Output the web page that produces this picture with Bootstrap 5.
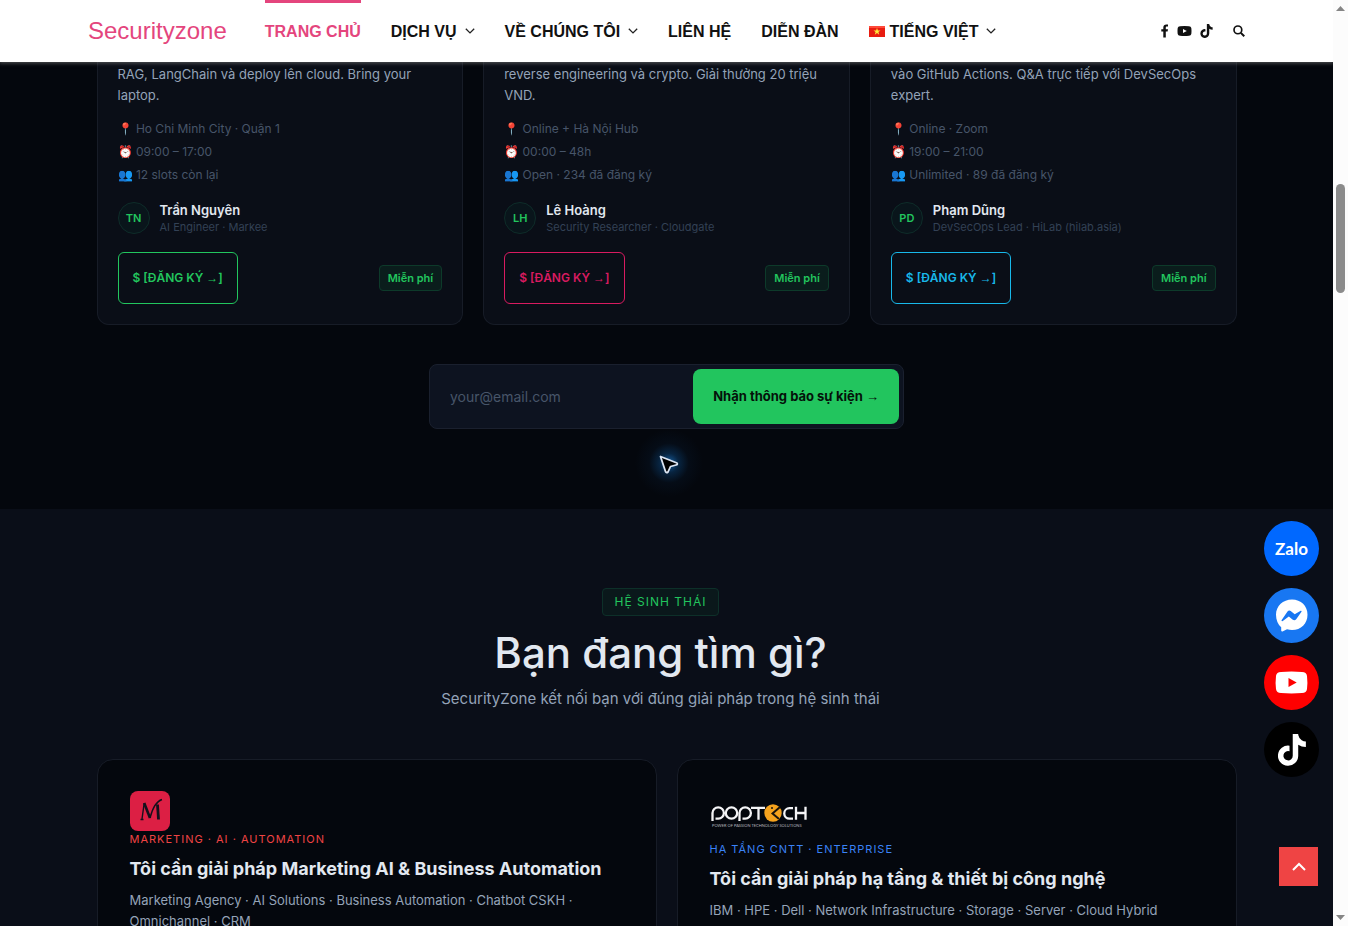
<!DOCTYPE html>
<html lang="vi">
<head>
<meta charset="utf-8">
<meta name="viewport" content="width=device-width, initial-scale=1">
<title>Securityzone</title>
<link rel="stylesheet" href="https://cdn.jsdelivr.net/npm/bootstrap@5.3.0/dist/css/bootstrap.min.css">
<style>
  :root { --ink: #04070d; --panel: #0a0e17; --edge: #171c27; --green: #22c55e; --text: #e2e8f0; --soft: #94a3b8; --dim: #475569; --pink: #e4457d; }
  body { font-family: Inter, "Open Sans", sans-serif; font-size: 13px; line-height: 21px; background: var(--ink); color: var(--soft); }
  a { text-decoration: none; }
  .site-header { background: #fff; height: 62px; padding: 0 88px; box-shadow: 0 0 4px 1px rgba(120,120,120,.7); z-index: 2; font-family: "Liberation Sans", Arial, sans-serif; }
  .brand { color: var(--pink); font-size: 24px; line-height: 30px; margin-right: 38px; }
  .brand:hover { color: var(--pink); }
  .menu { gap: 30px; font-size: 16px; font-weight: 700; }
  .menu a { color: #111; height: 62px; border-top: 3px solid transparent; padding-bottom: 3px; white-space: nowrap; }
  .menu a.current { color: var(--pink); border-color: var(--pink); }
  .menu .chev { margin-left: 8px; }
  .menu .flag { margin-right: 5px; }
  .tools a, .tools button { color: #111; line-height: 0; }
  .wrap { width: 100%; max-width: 1140px; margin: 0 auto; }
  .wrap .cols { gap: 20px; }
  .event { background: var(--panel); border: 1px solid var(--edge); border-top: 0; border-radius: 0 0 12px 12px; padding: 2px 20px 20px; flex: 1 1 0; min-width: 0; }
  .event p { height: 42px; margin-bottom: 11px; }
  .facts { font-size: 12px; line-height: 23px; color: var(--dim); margin-bottom: 16px; }
  .face { width: 32px; height: 32px; border: 1px solid #0e2c29; border-radius: 50%; background: #09151b; color: var(--green); font-size: 11px; font-weight: 600; }
  .who { gap: 10px; margin-bottom: 16px; }
  .who strong { display: block; color: var(--text); font-weight: 600; line-height: 16px; }
  .who small { display: block; font-size: 11px; line-height: 18px; color: #334155; }
  .join { height: 52px; padding: 0 14px; border: 1px solid var(--tone); color: var(--tone); border-radius: 6px; font-size: 12px; font-weight: 600; background: none; }
  .arrow { font-family: "Liberation Sans", Arial, sans-serif; font-weight: 400; }
  .free { border: 1px solid #0d3a2a; background: #0a1d1c; color: var(--green); font-size: 11px; font-weight: 600; line-height: 24px; padding: 0 8px; border-radius: 4px; }
  .notify { width: 475px; margin: 39px auto 80px; border: 1px solid #1a202e; background: #0d1320; border-radius: 8px; padding: 4px; }
  .notify input { background: none; border: 0; color: var(--text); font-size: 14px; padding: 0 16px; min-width: 0; outline: 0; }
  .notify input::placeholder { color: var(--dim); opacity: 1; }
  .notify button { height: 55px; border: 0; border-radius: 8px; background: var(--green); color: #04120a; font-weight: 700; padding: 0 20px; white-space: nowrap; }
  .eco { background: #0a0e18; padding-top: 79px; }
  .eco-head { padding-right: 12px; margin-bottom: 49px; }
  .tag { border: 1px solid #0d3029; background: #0a181b; color: var(--green); font-size: 12px; line-height: 26px; letter-spacing: 1px; padding: 0 12px; border-radius: 4px; }
  .eco h2 { color: var(--text); font-size: 42px; font-weight: 500; line-height: 50px; margin: 12px 0 10px; }
  .eco-head p { font-size: 15px; line-height: 22px; margin: 0; }
  .route { background: #04070d; border: 1px solid var(--edge); border-radius: 16px; padding: 31px 32px; flex: 1 1 0; min-width: 0; height: 240px; }
  .kind { font-size: 11px; line-height: 16px; letter-spacing: 1px; }
  .route h3 { color: var(--text); font-size: 18px; line-height: 24px; font-weight: 700; margin: 10px 0 9px; }
  .m-logo { width: 40px; height: 40px; border-radius: 8px; background: #dc1f44; }
  .p-logo { width: 100px; height: 50px; }
  .chat { position: fixed; right: 29px; top: 521px; gap: 12px; z-index: 3; }
  .chat a { width: 55px; height: 55px; border-radius: 50%; color: #fff; }
  .zalo { background: #0068ff; font: 700 17px Lato, sans-serif; }
  .to-top { position: fixed; right: 30px; bottom: 40px; width: 39px; height: 39px; background: #ef4444; border: 0; z-index: 3; }
  .pointer { position: absolute; left: 50%; top: 361px; margin-left: -38px; width: 80px; height: 80px; background: radial-gradient(circle, rgba(30,130,220,.7) 0, rgba(14,90,160,.35) 17%, rgba(14,60,110,.1) 35%, transparent 60%); }
  .rail { width: 15px; background: #fcfcfc; padding: 6px 0; }
  .rail i { width: 9px; height: 109px; border-radius: 5px; background: #8b8b8b; margin-top: 173px; }
</style>
</head>
<body class="d-flex vh-100 overflow-hidden">
<div class="d-flex flex-column flex-grow-1 overflow-hidden">
  <header class="site-header d-flex align-items-center flex-shrink-0 position-relative">
    <a class="brand" href="#">Securityzone</a>
    <nav class="menu d-flex">
      <a class="current d-flex align-items-center" href="#">TRANG CHỦ</a>
      <a class="d-flex align-items-center" href="#">DỊCH VỤ<svg class="chev" width="10" height="6" viewBox="0 0 10 6" fill="none" stroke="#222" stroke-width="1.3"><path d="M.8.7 5 4.9 9.200.7"/></svg></a>
      <a class="d-flex align-items-center" href="#">VỀ CHÚNG TÔI<svg class="chev" width="10" height="6" viewBox="0 0 10 6" fill="none" stroke="#222" stroke-width="1.3"><path d="M.8.7 5 4.9 9.200.7"/></svg></a>
      <a class="d-flex align-items-center" href="#">LIÊN HỆ</a>
      <a class="d-flex align-items-center" href="#">DIỄN ĐÀN</a>
      <a class="d-flex align-items-center" href="#"><svg class="flag" width="16" height="11" viewBox="0 0 16 11"><path fill="#e81c10" d="M0 0h16v11H0z"/><path fill="#ff4a3a" d="M0 0h16v2H0z"/><path fill="#ffea3c" d="m8 2 .9 2.500h2.600L9.400 6.100l.8 2.600L8 7.100 5.800 8.700l.8-2.600L4.500 4.500h2.600z"/></svg>TIẾNG VIỆT<svg class="chev" width="10" height="6" viewBox="0 0 10 6" fill="none" stroke="#222" stroke-width="1.3"><path d="M.8.7 5 4.900 9.200.7"/></svg></a>
    </nav>
    <div class="tools d-flex align-items-center ms-auto">
      <a href="#" aria-label="Facebook"><svg width="8" height="14" viewBox="0 0 8 14" fill="currentColor"><path d="M2.300 13.500V7.500H.3V5.200h2V3.500C2.300 1.500 3.500.4 5.300.4c.8 0 1.700.2 1.700.2v1.900H6c-1 0-1.200.6-1.200 1.200v1.500H7l-.4 2.300H4.800v6z"/></svg></a>
      <a class="ms-2" href="#" aria-label="YouTube"><svg width="15" height="10" viewBox="0 0 14 10"><path fill="currentColor" d="M2.500.2Q7-.2 11.500.2 13.500.3 13.800 2q.4 3 0 6-.3 1.700-2.300 1.800-4.500.4-9 0Q.5 9.700.2 8q-.4-3 0-6Q.5.3 2.500.2z"/><path fill="#fff" d="m5.500 2.900 3.800 2.100-3.800 2.100z"/></svg></a>
      <a class="ms-2" href="#" aria-label="TikTok"><svg width="13" height="14" viewBox="0 0 448 512" fill="currentColor"><path d="M448 210a210 210 0 0 1-123-39v179A163 163 0 1 1 185 188v90a75 75 0 1 0 52 71V0h88a121 121 0 0 0 2 22 122 122 0 0 0 54 80 121 121 0 0 0 67 20z"/></svg></a>
      <button class="btn p-0 border-0 ms-3" type="button" aria-label="Tìm kiếm"><svg class="ms-1" width="12" height="12" viewBox="0 0 13 13" fill="none" stroke="currentColor"><circle cx="5.300" cy="5.300" r="4.200" stroke-width="1.800"/><path stroke-width="2.200" d="m8.500 8.500 3.700 3.700"/></svg></button>
    </div>
  </header>

  <main class="flex-grow-1 overflow-hidden position-relative">
    <section>
      <div class="wrap">
        <div class="cols d-flex">
          <article class="event">
            <p>RAG, LangChain và deploy lên cloud. Bring your laptop.</p>
            <div class="facts"><div>📍 Ho Chi Minh City · Quận 1</div><div>⏰ 09:00 – 17:00</div><div>👥 12 slots còn lại</div></div>
            <div class="who d-flex"><span class="face d-flex align-items-center justify-content-center">TN</span><div><strong>Trần Nguyên</strong><small>AI Engineer · Markee</small></div></div>
            <div class="d-flex align-items-center justify-content-between"><button class="join" type="button" style="--tone:#22c55e">$ [ĐĂNG KÝ <span class="arrow">→</span>]</button><span class="free">Miễn phí</span></div>
          </article>
          <article class="event">
            <p>reverse engineering và crypto. Giải thưởng 20 triệu VND.</p>
            <div class="facts"><div>📍 Online + Hà Nội Hub</div><div>⏰ 00:00 – 48h</div><div>👥 Open · 234 đã đăng ký</div></div>
            <div class="who d-flex"><span class="face d-flex align-items-center justify-content-center">LH</span><div><strong>Lê Hoàng</strong><small>Security Researcher · Cloudgate</small></div></div>
            <div class="d-flex align-items-center justify-content-between"><button class="join" type="button" style="--tone:#d81b60">$ [ĐĂNG KÝ <span class="arrow">→</span>]</button><span class="free">Miễn phí</span></div>
          </article>
          <article class="event">
            <p>vào GitHub Actions. Q&amp;A trực tiếp với DevSecOps expert.</p>
            <div class="facts"><div>📍 Online · Zoom</div><div>⏰ 19:00 – 21:00</div><div>👥 Unlimited · 89 đã đăng ký</div></div>
            <div class="who d-flex"><span class="face d-flex align-items-center justify-content-center">PD</span><div><strong>Phạm Dũng</strong><small>DevSecOps Lead · HiLab (hilab.asia)</small></div></div>
            <div class="d-flex align-items-center justify-content-between"><button class="join" type="button" style="--tone:#18b8ea">$ [ĐĂNG KÝ <span class="arrow">→</span>]</button><span class="free">Miễn phí</span></div>
          </article>
        </div>
        <form class="notify d-flex">
          <input class="flex-grow-1" type="email" placeholder="your@email.com" aria-label="Email">
          <button type="button">Nhận thông báo sự kiện <span class="arrow">→</span></button>
        </form>
      </div>
    </section>

    <section class="eco">
      <div class="wrap">
        <div class="eco-head d-flex flex-column align-items-center text-center">
          <span class="tag">HỆ SINH THÁI</span>
          <h2>Bạn đang tìm gì?</h2>
          <p>SecurityZone kết nối bạn với đúng giải pháp trong hệ sinh thái</p>
        </div>
        <div class="cols d-flex">
          <article class="route">
            <svg class="m-logo d-block" viewBox="0 0 40 40"><g fill="none" stroke="#14101c"><path stroke-width="1.400" d="M10.500 28.500h3M12 28 14.200 12"/><path stroke-width="2.600" d="M14.200 12 20 27"/><path stroke-width="1.400" d="M20 27q4-16 12-18.500"/><path stroke-width="2.800" d="M27.500 13.500 28.500 28.500"/></g></svg>
            <div class="kind" style="color:#ef4444">MARKETING · AI · AUTOMATION</div>
            <h3>Tôi cần giải pháp Marketing AI &amp; Business Automation</h3>
            <p>Marketing Agency · AI Solutions · Business Automation · Chatbot CSKH · Omnichannel · CRM</p>
          </article>
          <article class="route">
            <svg class="p-logo d-block" viewBox="0 0 100 50" role="img" aria-label="POPTECH">
              <g fill="none" stroke="#f4f4f6" stroke-width="2.300"><path d="M2.500 30V22a5.700 5.700 0 1 1 5.700 5.700H5.500"/><circle cx="21.500" cy="22" r="5.700"/><path d="M29.500 30V22a5.700 5.700 0 1 1 5.700 5.700h-2.700"/><path d="M41 16.800h14M48.500 16.800v12M83 17.200h-3.500a5.200 5.200 0 0 0 0 10.500H83M86 15.700v13M95.500 15.700v13M86 22h9.500"/></g>
              <circle cx="63" cy="22" r="8.700" fill="#f5a21d"/><path d="m70 16-7.500 6.500L69 28" fill="none" stroke="#1a140c" stroke-width="2"/><circle cx="62" cy="17" r="1" fill="#1a140c"/>
              <text x="2" y="36" fill="#b4b7be" font-size="4" font-family="Lato, sans-serif">POWER OF PASSION TECHNOLOGY SOLUTIONS</text>
            </svg>
            <div class="kind" style="color:#3b82f6">HẠ TẦNG CNTT · ENTERPRISE</div>
            <h3>Tôi cần giải pháp hạ tầng &amp; thiết bị công nghệ</h3>
            <p>IBM · HPE · Dell · Network Infrastructure · Storage · Server · Cloud Hybrid</p>
          </article>
        </div>
      </div>
    </section>

    <svg class="pointer" viewBox="-40 -40 80 80"><path d="M-8.500-6.500 8 0q1 1.500-1 2L1.500 3.500-1 9q-1.500 1.500-2.500-.5z" fill="#000" stroke="#dbe4f2" stroke-width="1.800" stroke-linejoin="round"/></svg>
  </main>
</div>

<aside class="rail d-flex flex-column align-items-center flex-shrink-0" aria-hidden="true">
  <svg width="9" height="5"><path fill="#858585" d="M0 5 4.500 0 9 5z"/></svg>
  <i></i>
  <svg class="mt-auto" width="9" height="5"><path fill="#858585" d="m0 0 4.500 5L9 0z"/></svg>
</aside>

<div class="chat d-flex flex-column">
  <a class="zalo d-flex align-items-center justify-content-center" href="#">Zalo</a>
  <a href="#" aria-label="Messenger"><svg width="55" height="55" viewBox="0 0 55 55"><circle cx="27.500" cy="27.500" r="27.500" fill="#1877f2"/><path fill="#fff" d="M28 11.500c9 0 15.500 6.500 15.500 15.200S37 42 28 42q-2.500 0-5-.8L18.500 43.500q-1.200.3-1.300-1v-3.200C14 36.500 12 32 12 26.700 12 18 19 11.500 28 11.500z"/><path fill="#1877f2" d="m17.500 32.300 6-8.800q1.400-1.500 3.200-.5l4 3.200 6-3.500q1.200-.2.800 1l-5.300 7.500q-1.500 1.700-3.400.6l-4-3.200-6 4.500q-1.400.3-1.300-.8z"/></svg></a>
  <a href="#" aria-label="YouTube"><svg width="55" height="55" viewBox="0 0 55 55"><circle cx="27.500" cy="27.500" r="27.500" fill="#f00"/><path fill="#fff" d="M17 16.900q10.500-.9 21 0 4.500.2 5 4 .8 6.600 0 13.200-.5 3.800-5 4-10.500.9-21 0-4.500-.2-5-4-.8-6.600 0-13.200.5-3.800 5-4z"/><path fill="#f00" d="m24.500 23 8.200 4.500-8.200 4.500z"/></svg></a>
  <a href="#" aria-label="TikTok"><svg width="55" height="55" viewBox="0 0 55 55"><circle cx="27.500" cy="27.500" r="27.500" fill="#000"/><path fill="#fff" transform="translate(14 12) scale(.0622)" d="M448 210a210 210 0 0 1-123-39v179A163 163 0 1 1 185 188v90a75 75 0 1 0 52 71V0h88a121 121 0 0 0 2 22 122 122 0 0 0 54 80 121 121 0 0 0 67 20z"/></svg></a>
</div>
<button class="to-top d-flex align-items-center justify-content-center p-0" type="button" aria-label="Lên đầu trang"><svg width="14" height="9" viewBox="0 0 14 9" fill="none" stroke="#fff" stroke-width="2"><path d="m1 8 6-6 6 6"/></svg></button>
<script src="https://cdn.jsdelivr.net/npm/bootstrap@5.3.0/dist/js/bootstrap.bundle.min.js"></script>
</body>
</html>
